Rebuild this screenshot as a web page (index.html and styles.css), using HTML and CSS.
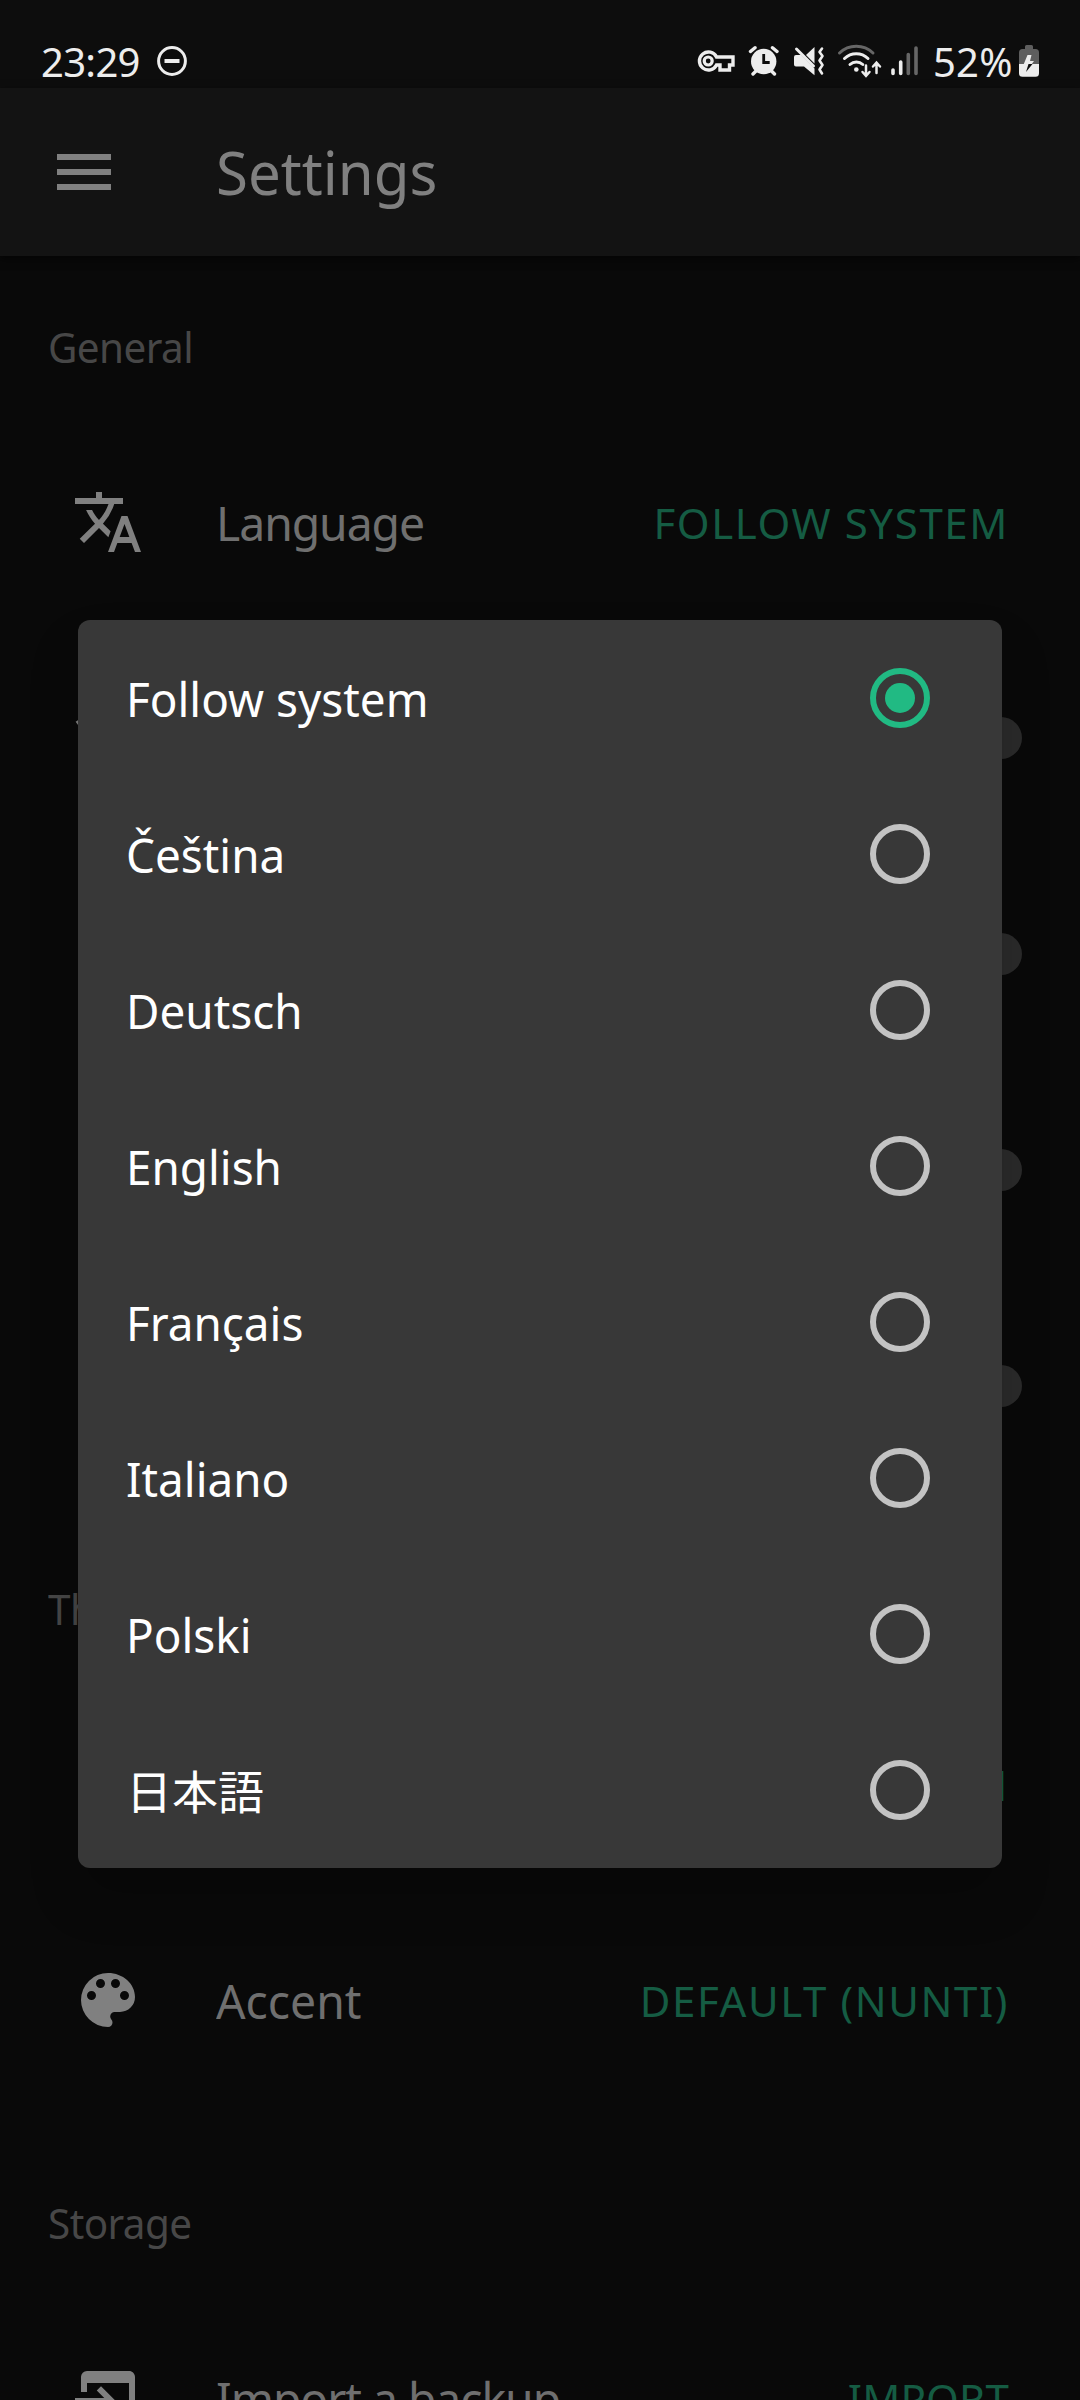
FILE: index.html
```html
<!DOCTYPE html>
<html lang="en">
<head>
<meta charset="utf-8">
<title>Settings</title>
<link rel="stylesheet" href="styles.css">
</head>
<body>
<div class="screen">
  <header class="status">
    <div class="status-left">
      <span class="clock">23:29</span>
      <svg class="dnd" width="32" height="32" viewBox="0 0 32 32"><circle cx="16" cy="16" r="13.4" fill="none" stroke="#ededed" stroke-width="3"/><path d="M8.5 14h15v4h-15z" fill="#ededed"/></svg>
    </div>
    <div class="status-right">
      <svg class="key" width="38" height="40" viewBox="697 40 38 40" fill="none" stroke="#ededed" stroke-width="3.400"><path d="M716.500 57a9 9 0 1 0 0 8h3.500v5h9.500v-5h3.500v-8z"/><circle cx="708.200" cy="61" r="4" stroke-width="3.200"/></svg>
      <svg class="alarm" width="32" height="40" viewBox="748 40 32 40"><circle cx="763.700" cy="61.500" r="12.700" fill="#ededed"/><path d="M750.500 51.500l4.500-3.800M772.500 47.700l4.500 3.800M756 71l-3 3M771.500 71l3 3" stroke="#ededed" stroke-width="3.400" stroke-linecap="round" fill="none"/><path d="M763.700 54v8.500h6" stroke="#0d0d0d" stroke-width="2.800" fill="none"/></svg>
      <svg class="mute" width="32" height="40" viewBox="793 40 32 40"><path d="M806 55l8.500-8v16.500zM796 55h5l13.500 13.500v6.700L804 66.500h-8a2 2 0 0 1-2-2v-7.500a2 2 0 0 1 2-2z" fill="#ededed"/><path d="M796.500 49l17 17" stroke="#ededed" stroke-width="3" stroke-linecap="round"/><path d="M822 48.500l-2.500 3.500 3 4-3 4.500 3 4.500-3 4.500 2.500 4" stroke="#ededed" stroke-width="2.600" stroke-linecap="round" stroke-linejoin="round" fill="none"/></svg>
      <svg class="wifi" width="46" height="40" viewBox="837 40 46 40" fill="none" stroke-linecap="round" stroke-width="3"><path d="M839.500 53a24 24 0 0 1 33.500 0" stroke="#666"/><path d="M844.500 58.500a17 17 0 0 1 23.500 0M850 64.500a9.500 9.500 0 0 1 12.800 0" stroke="#ededed"/><circle cx="856.300" cy="69.500" r="2.300" fill="#ededed"/><path d="M866 65.500v10M862.500 72l3.500 3.800 3.500-3.800M876.500 73v-10M873 66.500l3.500-3.800 3.500 3.800" stroke="#ededed" stroke-width="2.500"/></svg>
      <svg class="signal" width="30" height="40" viewBox="890 40 30 40" stroke-width="3.600" stroke-linecap="round"><path d="M893 70v3.500M900.700 62v11.500" stroke="#ededed"/><path d="M908.300 54.500v19M916 48v25.500" stroke="#666"/></svg>
      <span class="percent">52%</span>
      <svg class="battery" width="22" height="40" viewBox="1018 40 22 40"><path d="M1025 49v-2.500a1.500 1.500 0 0 1 1.500-1.500h5a1.500 1.500 0 0 1 1.500 1.500V49h2.500a3.500 3.500 0 0 1 3.500 3.500V64h-20V52.500a3.500 3.500 0 0 1 3.500-3.500z" fill="#5e5e5e"/><path d="M1019 64h20v9.300a3.500 3.500 0 0 1-3.500 3.500h-13a3.500 3.500 0 0 1-3.500-3.500z" fill="#ededed"/><path d="M1027.500 55h4l-1.500 6h4l-2.200 3h-8z" fill="#ededed"/><path d="M1028.500 64h4l-6.500 8z" fill="#0d0d0d"/></svg>
    </div>
  </header>

  <nav class="appbar">
    <svg class="icon" viewBox="0 0 24 24"><path d="M3 6h18v2H3V6m0 5h18v2H3v-2m0 5h18v2H3v-2z"/></svg>
    <h1 class="title">Settings</h1>
  </nav>

  <main class="settings">
    <h2 class="caption first"><span>General</span></h2>
    <div class="row">
      <svg class="icon" viewBox="0 0 24 24"><path d="M12.870 15.070l-2.540-2.510.030-.030A17.520 17.520 0 0 0 14.070 6H17V4h-7V2H8v2H1v2h11.170C11.500 7.920 10.440 9.750 9 11.350 8.070 10.320 7.300 9.190 6.690 8h-2c.730 1.630 1.730 3.170 2.980 4.560l-5.090 5.020L4 19l5-5 3.110 3.110.760-2.040M18.500 10h-2L12 22h2l1.120-3h4.750L21 22h2l-4.500-12m-2.620 7l1.620-4.330L19.120 17h-3.240z"/></svg>
      <span class="label">Language</span><span class="value">FOLLOW SYSTEM</span>
    </div>
    <div class="row">
      <svg class="icon" viewBox="0 0 24 24"><path d="M12 21l3.600-4.800C14.600 15.450 13.350 15 12 15s-2.600.450-3.600 1.200L12 21M12 3C7.950 3 4.210 4.340 1.200 6.600L3 9c2.500-1.880 5.620-3 9-3s6.500 1.120 9 3l1.800-2.400C19.790 4.340 16.050 3 12 3m0 6c-2.700 0-5.190.890-7.200 2.400l1.800 2.400C8.100 12.670 9.970 12 12 12s3.900.670 5.400 1.800l1.800-2.400C17.190 9.890 14.700 9 12 9z"/></svg>
      <span class="switch"></span>
    </div>
    <div class="row"><span class="switch"></span></div>
    <div class="row"><span class="switch"></span></div>
    <div class="row"><span class="switch"></span></div>

    <h2 class="caption"><span>Theme</span></h2>
    <div class="row"><span class="value">FOLLOW SYSTEM</span></div>
    <div class="row">
      <svg class="icon" viewBox="0 0 24 24"><path d="M17.500 12a1.500 1.500 0 0 1-1.500-1.500A1.500 1.500 0 0 1 17.500 9a1.500 1.500 0 0 1 1.500 1.500 1.500 1.500 0 0 1-1.500 1.500m-3-4A1.500 1.500 0 0 1 13 6.500 1.500 1.500 0 0 1 14.500 5 1.500 1.500 0 0 1 16 6.500 1.500 1.500 0 0 1 14.500 8m-5 0A1.500 1.500 0 0 1 8 6.500 1.500 1.500 0 0 1 9.500 5 1.500 1.500 0 0 1 11 6.500 1.500 1.500 0 0 1 9.500 8m-3 4A1.500 1.500 0 0 1 5 10.500 1.500 1.500 0 0 1 6.500 9 1.500 1.500 0 0 1 8 10.500 1.500 1.500 0 0 1 6.500 12M12 3a9 9 0 0 0-9 9 9 9 0 0 0 9 9 1.500 1.500 0 0 0 1.500-1.500c0-.390-.150-.740-.390-1-.230-.270-.380-.620-.380-1a1.500 1.500 0 0 1 1.500-1.500H16a5 5 0 0 0 5-5c0-4.420-4.030-8-9-8z"/></svg>
      <span class="label loose">Accent</span><span class="value">DEFAULT (NUNTI)</span>
    </div>

    <h2 class="caption"><span>Storage</span></h2>
    <div class="row">
      <svg class="icon" viewBox="0 0 24 24"><path d="M1 12h9.760l-2.500-2.500 1.410-1.420L14.590 13l-4.920 4.920-1.410-1.420 2.500-2.500H1v-2M19 3c1.110 0 2 .9 2 2v14a2 2 0 0 1-2 2H5a2 2 0 0 1-2-2v-3h2v3h14V7H5v3H3V5a2 2 0 0 1 2-2h14z"/></svg>
      <span class="label">Import a backup</span><span class="value tight">IMPORT</span>
    </div>
  </main>

  <div class="dialog" role="dialog">
    <div class="option"><span class="name">Follow system</span><i class="radio on"></i></div>
    <div class="option"><span class="name">Čeština</span><i class="radio"></i></div>
    <div class="option"><span class="name">Deutsch</span><i class="radio"></i></div>
    <div class="option"><span class="name">English</span><i class="radio"></i></div>
    <div class="option"><span class="name">Français</span><i class="radio"></i></div>
    <div class="option"><span class="name">Italiano</span><i class="radio"></i></div>
    <div class="option"><span class="name">Polski</span><i class="radio"></i></div>
    <div class="option"><span class="name ja" lang="ja">日本語</span><i class="radio"></i></div>
  </div>
</div>
</body>
</html>
```
FILE: styles.css
```css
* { box-sizing: border-box; }

body {
  margin: 0;
  background: #090909;
  font-family: "Noto Sans", "Noto Sans CJK JP", sans-serif;
}

.screen {
  position: relative;
  width: 1080px;
  height: 2400px;
  overflow: hidden;
}

/* Status bar */
.status {
  display: flex;
  justify-content: space-between;
  height: 88px;
  padding: 41px 40px 0 41px;
  background: #0d0d0d;
  color: #ededed;
  font-size: 40px;
  line-height: 41px;
}
.status-left,
.status-right { display: flex; align-items: flex-start; height: 40px; }
.clock { width: 115px; letter-spacing: -.7px; }
.dnd { margin-top: 4px; }
.status-right svg { margin-top: -1px; flex: none; }
.key { margin-right: 13px; }
.alarm { margin-right: 13px; }
.mute { margin-right: 12px; }
.wifi { margin-right: 7px; }
.signal { margin-right: 13px; }
.percent { width: 85px; letter-spacing: .2px; }

/* App bar */
.appbar {
  display: flex;
  align-items: center;
  height: 168px;
  padding: 0 48px;
  background: #131313;
  box-shadow: 0 3px 8px rgba(0, 0, 0, .6);
}
.icon { width: 72px; height: 72px; fill: #808080; flex: none; }
.title {
  margin: 0 0 0 96px;
  color: #808080;
  font-size: 60px;
  font-weight: 400;
  transform: scaleX(.97);
  transform-origin: left;
}

/* Settings list */
.caption {
  display: flex;
  align-items: flex-end;
  height: 182px;
  margin: 0;
  padding: 0 48px 37px;
  color: #474747;
  font-size: 42px;
  font-weight: 400;
  line-height: 60px;
  letter-spacing: -.6px;
}
.caption.first { height: 158px; }
.caption span { transform: scaleX(.963); transform-origin: left; }
.row {
  display: flex;
  align-items: center;
  height: 216px;
  padding: 0 58px 0 72px;
}
.label {
  margin-left: 72px;
  color: #6f6f6f;
  font-size: 48px;
  letter-spacing: -1.1px;
  white-space: nowrap;
  transform: scaleX(.965);
  transform-origin: left;
}
.label.loose { letter-spacing: 0; }
.value {
  margin-left: auto;
  margin-right: 13px;
  color: #155c43;
  font-size: 42px;
  letter-spacing: 1.6px;
  white-space: nowrap;
}
.value.tight { letter-spacing: .2px; }
.switch {
  width: 102px;
  height: 42px;
  margin-left: auto;
  border-radius: 21px;
  background: #2b2b2b;
}

/* Language picker */
.dialog {
  position: absolute;
  top: 620px;
  left: 78px;
  width: 924px;
  border-radius: 12px;
  background: #383838;
  box-shadow: 0 30px 50px rgba(0, 0, 0, .2);
}
.option {
  display: flex;
  align-items: center;
  justify-content: space-between;
  height: 156px;
  padding: 0 72px 0 48px;
}
.name {
  color: #fff;
  font-size: 48px;
  transform: scaleX(.955);
  transform-origin: left;
}
.name.ja {
  font-family: "Noto Sans CJK JP", sans-serif;
  font-size: 46px;
  line-height: 66px;
  margin-top: -2px;
  transform: none;
}
.radio {
  display: flex;
  width: 60px;
  height: 60px;
  border: 6px solid #c3c3c3;
  border-radius: 50%;
}
.radio.on { border-color: #21ba83; }
.radio.on::before {
  content: "";
  width: 30px;
  height: 30px;
  margin: auto;
  border-radius: 50%;
  background: #21ba83;
}
```
